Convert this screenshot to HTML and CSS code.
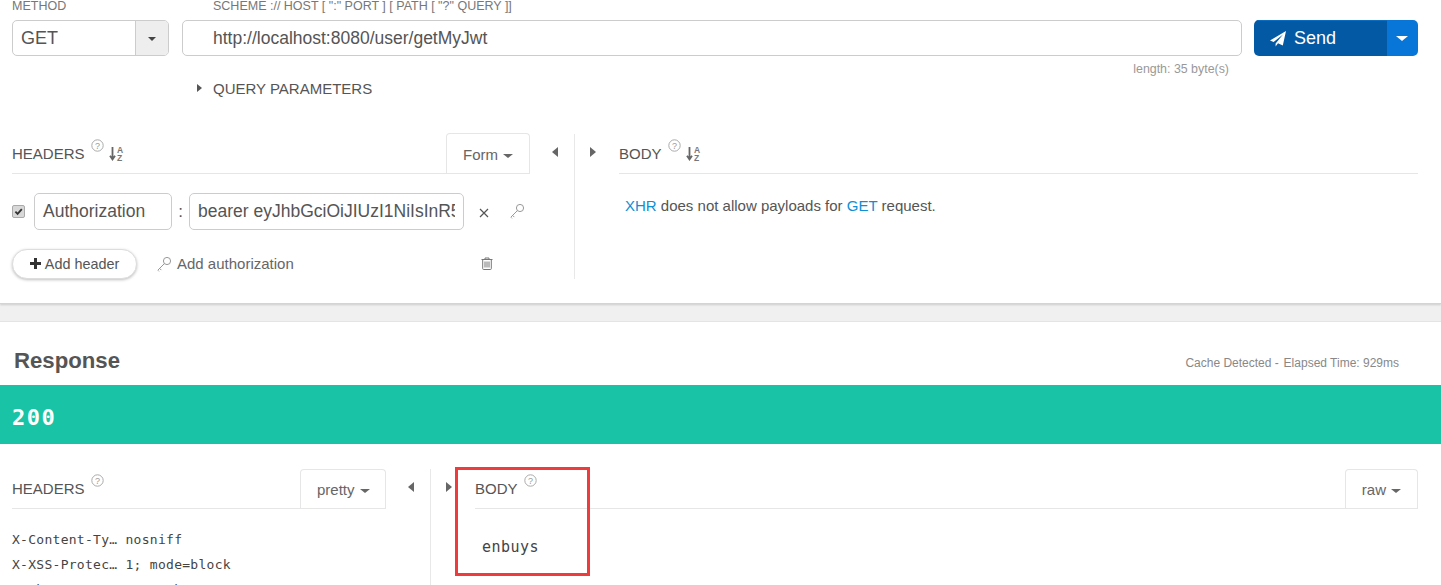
FILE: index.html
```html
<!DOCTYPE html>
<html lang="en">
<head>
<meta charset="utf-8">
<title>Request</title>
<link rel="stylesheet" href="styles.css">
</head>
<body>
<section class="request">
  <div class="url-row">
    <div class="method">
      <div class="cap">METHOD</div>
      <div class="select"><span class="select-val">GET</span><span class="select-btn"><i class="caret"></i></span></div>
    </div>
    <div class="url">
      <div class="cap cap-url">SCHEME :// HOST [ ":" PORT ] [ PATH [ "?" QUERY ]]</div>
      <div class="url-input">http://localhost:8080/user/getMyJwt</div>
      <div class="length">length: 35 byte(s)</div>
    </div>
    <div class="send">
      <div class="send-main">
        <svg class="plane" viewBox="0 0 16 16"><path d="M16 0 12.8 14.4 8 12.3 5.6 15.6V12.4L13 3.4 3.6 11 0 9.4Z" fill="#fff"/></svg>
        <span>Send</span>
      </div>
      <div class="send-drop"><i class="caret caret-w"></i></div>
    </div>
  </div>
  <div class="query"><i class="tri-r"></i><span class="query-label">QUERY PARAMETERS</span></div>
  <div class="split split-req">
    <div class="pane-l">
      <div class="pane-head">
        <span class="title">HEADERS</span>
        <svg class="help" viewBox="0 0 13 13"><circle cx="6.5" cy="6.5" r="5.7" fill="none" stroke="#aaa"/><text x="6.5" y="9.5" text-anchor="middle" class="help-t">?</text></svg>
        <svg class="sort" viewBox="0 0 15 15"><path d="M3.5 1v12M1 9.8l2.5 3.7L6 9.8" fill="none" stroke="#666" stroke-width="1.8"/><text x="8" y="7" class="sort-t">A</text><text x="8" y="15" class="sort-t">Z</text></svg>
        <span class="tab">Form<i class="caret caret-g"></i></span>
      </div>
      <div class="hdr-row">
        <span class="check"><svg viewBox="0 0 12 12"><path d="M2.6 6.2 5 8.6 9.6 3.4" fill="none" stroke="#333" stroke-width="2"/></svg></span>
        <div class="field field-name">Authorization</div>
        <span class="colon">:</span>
        <div class="field field-val"><span class="clip">bearer eyJhbGciOiJIUzI1NiIsInR5</span></div>
        <svg class="x" viewBox="0 0 10 10"><path d="M1 1 9 9M9 1 1 9" stroke="#555" stroke-width="1.2"/></svg>
        <svg class="key key-row" viewBox="0 0 16 16"><circle cx="11" cy="5" r="3.6" fill="none" stroke="#999"/><path d="M8.4 7.6 2 14M3.6 12.4l1.7 1.7M1.8 14.2l1.2 1.2" fill="none" stroke="#999"/></svg>
      </div>
      <div class="add-row">
        <span class="add-btn"><svg class="plus" viewBox="0 0 11 11"><path d="M5.5 0v11M0 5.5h11" stroke="#333" stroke-width="3"/></svg>Add header</span>
        <svg class="key key-add" viewBox="0 0 16 16"><circle cx="11" cy="5" r="3.6" fill="none" stroke="#999"/><path d="M8.4 7.6 2 14M3.6 12.4l1.7 1.7M1.8 14.2l1.2 1.2" fill="none" stroke="#999"/></svg>
        <span class="add-auth">Add authorization</span>
        <svg class="trash" viewBox="0 0 12 13"><path d="M.5 2.5h11M4 2.5V1h4v1.5M1.7 2.5v9.2c0 .5.3.8.8.8h7c.5 0 .8-.3.8-.8V2.5" fill="none" stroke="#777"/><path d="M4 4.5v6M6 4.5v6M8 4.5v6" stroke="#777"/></svg>
      </div>
    </div>
    <i class="tri-l arrow-l"></i>
    <div class="divider"></div>
    <i class="tri-r arrow-r"></i>
    <div class="pane-r">
      <div class="pane-head">
        <span class="title">BODY</span>
        <svg class="help" viewBox="0 0 13 13"><circle cx="6.5" cy="6.5" r="5.7" fill="none" stroke="#aaa"/><text x="6.5" y="9.5" text-anchor="middle" class="help-t">?</text></svg>
        <svg class="sort" viewBox="0 0 15 15"><path d="M3.5 1v12M1 9.8l2.5 3.7L6 9.8" fill="none" stroke="#666" stroke-width="1.8"/><text x="8" y="7" class="sort-t">A</text><text x="8" y="15" class="sort-t">Z</text></svg>
      </div>
      <p class="note"><span class="link">XHR</span> does not allow payloads for <span class="link">GET</span> request.</p>
    </div>
  </div>
</section>
<div class="gap"></div>
<section class="response">
  <div class="resp-head">
    <h2>Response</h2>
    <span class="elapsed">Cache Detected - <span class="elapsed-time">Elapsed Time: 929ms</span></span>
  </div>
  <div class="status">200</div>
  <div class="split split-resp">
    <div class="pane-l pane-l-resp">
      <div class="pane-head">
        <span class="title">HEADERS</span>
        <svg class="help" viewBox="0 0 13 13"><circle cx="6.5" cy="6.5" r="5.7" fill="none" stroke="#aaa"/><text x="6.5" y="9.5" text-anchor="middle" class="help-t">?</text></svg>
        <span class="tab tab-resp">pretty<i class="caret caret-g"></i></span>
      </div>
      <div class="mono-list">
        <div>X-Content-Ty… nosniff</div>
        <div>X-XSS-Protec… 1; mode=block</div>
        <div class="mono-row">Cache-Contro… no-cache<span class="more">?</span></div>
      </div>
    </div>
    <i class="tri-l arrow-l2"></i>
    <div class="divider"></div>
    <i class="tri-r arrow-r2"></i>
    <div class="pane-r pane-r-resp">
      <div class="pane-head">
        <span class="title">BODY</span>
        <svg class="help" viewBox="0 0 13 13"><circle cx="6.5" cy="6.5" r="5.7" fill="none" stroke="#aaa"/><text x="6.5" y="9.5" text-anchor="middle" class="help-t">?</text></svg>
        <span class="tab tab-resp tab-raw">raw<i class="caret caret-g"></i></span>
      </div>
      <div class="raw">enbuys</div>
    </div>
  </div>
  <div class="highlight"></div>
</section>
</body>
</html>
```
FILE: styles.css
```css
* { box-sizing: border-box; }
html, body { margin: 0; height: 585px; overflow: hidden; }
body { font-family: "Liberation Sans", Arial, sans-serif; color: #555; background: #fff; position: relative; }

.request { height: 304px; border-bottom: 1px solid #d4d4d4; box-shadow: 0 1px 2px rgba(0,0,0,.15); position: relative; padding: 0 23px 0 12px; background: #fff; }
.url-row { display: flex; height: 78px; }
.cap { font-size: 12.5px; color: #777; line-height: 12px; height: 20px; }
.method { width: 157px; margin-right: 13px; }
.select { display: flex; height: 36px; border: 1px solid #ccc; border-radius: 5px; overflow: hidden; }
.select-val { flex: 1; font-size: 18px; line-height: 34px; padding-left: 8px; color: #555; }
.select-btn { width: 33px; background: #eee; border-left: 1px solid #ccc; display: flex; align-items: center; justify-content: center; padding-top: 2px; }
.caret { display: inline-block; border: 4px solid transparent; border-top: 4px solid #444; border-bottom: 0; }
.caret-w { border-width: 5px 6px 0; border-top-color: #fff; }
.caret-g { border-width: 4px 5px 0; border-top-color: #666; margin-left: 5px; vertical-align: 2px; }
.url { width: 1060px; margin-right: 12px; position: relative; }
.cap-url { padding-left: 31px; }
.url-input { height: 36px; border: 1px solid #ccc; border-radius: 5px; font-size: 17.5px; line-height: 34px; padding-left: 30px; color: #555; }
.length { font-size: 12.4px; color: #999; text-align: right; padding: 6px 13px 0 0; line-height: 14px; }
.send { width: 164px; height: 36px; margin-top: 20px; display: flex; border-radius: 5px; overflow: hidden; color: #fff; }
.send-main { width: 133px; background: #0459a5; display: flex; align-items: center; padding-left: 16px; font-size: 18px; border-top: 1px solid #0a6cc0; }
.plane { width: 16px; height: 16px; margin-right: 8px; }
.send-drop { flex: 1; background: #0875d8; display: flex; align-items: center; justify-content: center; padding-right: 1px; }

.query { font-size: 15px; color: #555; height: 20px; line-height: 20px; padding-left: 185px; display: flex; align-items: center; }
.query-label { padding-top: 1px; }
.tri-r { display: inline-block; border-style: solid; border-color: transparent; border-width: 4px 0 4px 5px; border-left-color: #555; }
.tri-l { display: inline-block; border-style: solid; border-color: transparent; border-width: 5px 6px 5px 0; border-right-color: #666; }
.query .tri-r { margin-right: 11px; }

.split { display: flex; align-items: flex-start; position: relative; }
.split-req { margin-top: 36px; height: 145px; }
.pane-l { width: 518px; }
.pane-r { flex: 1; min-width: 0; margin-left: 23px; }
.divider { width: 1px; background: #e8e8e8; align-self: stretch; }
.arrow-l, .arrow-l2 { margin: 13px 16px 0 22px; }
.arrow-r, .arrow-r2 { margin: 13px 0 0 15px; border-width: 5px 0 5px 6px; border-left-color: #666; }
.pane-head { height: 40px; border-bottom: 1px solid #e6e6e6; display: flex; align-items: flex-end; position: relative; }
.title { font-size: 15px; color: #555; line-height: 16px; margin-bottom: 11px; }
.help { width: 13px; height: 13px; margin: 0 0 21px 6px; }
.help-t { font: 9px "Liberation Sans", sans-serif; fill: #999; }
.sort { width: 15px; height: 15px; margin: 0 0 12px 5px; overflow: visible; }
.sort-t { font: bold 8.5px "Liberation Sans", sans-serif; fill: #777; }
.tab { margin-left: auto; height: 40px; border: 1px solid #e6e6e6; border-bottom: 0; border-radius: 4px 4px 0 0; font-size: 15px; color: #666; line-height: 42px; padding: 0 16px; background: #fff; }
.tab-resp { height: 39px; line-height: 40px; padding: 0 15.5px; }
.tab-raw { padding: 0 16px; }

.hdr-row { display: flex; align-items: center; margin-top: 19px; height: 37px; }
.check { width: 13px; height: 13px; background: #d8d8d8; border: 1px solid #aaa; border-radius: 2px; margin-right: 9px; display: flex; }
.field { height: 37px; border: 1px solid #ccc; border-radius: 5px; font-size: 17.5px; line-height: 35px; padding: 0 8px; color: #555; white-space: nowrap; }
.field-name { width: 138px; }
.field-val { width: 275px; }
.clip { display: block; overflow: hidden; }
.colon { width: 17px; text-align: center; font-size: 17px; color: #555; }
.x { width: 10px; height: 10px; margin-left: 15px; margin-top: 3px; }
.key { width: 16px; height: 16px; }
.key-row { margin: 0 0 1px 20px; }
.add-row { display: flex; align-items: center; margin-top: 19px; height: 29px; position: relative; }
.add-btn { width: 125px; height: 30px; border-radius: 15px; border: 1px solid #ddd; box-shadow: 0 1px 3px rgba(0,0,0,.25); font-size: 14.4px; color: #555; display: flex; align-items: center; justify-content: center; background: #fff; }
.plus { width: 11px; height: 11px; margin-right: 4px; }
.key-add { margin-left: 19px; margin-right: 5px; }
.add-auth { font-size: 15px; color: #666; }
.trash { width: 12px; height: 13px; margin-left: auto; margin-right: 37px; }
.note { margin: 24px 0 0 6px; font-size: 15px; color: #555; line-height: 16px; }
.link { color: #0d8fd6; }

.gap { height: 18px; background: #f0f0f0; border-bottom: 1px solid #e4e4e4; }
.response { position: relative; }
.resp-head { height: 63px; display: flex; padding: 0 42px 0 14px; justify-content: space-between; align-items: flex-start; }
.resp-head h2 { margin: 26px 0 0; font-size: 22.2px; line-height: 25px; font-weight: 700; color: #555; }
.elapsed { margin: 34px 0 0; font-size: 12px; line-height: 14px; color: #888; }
.elapsed-time { margin-left: 1.5px; }
.status { height: 59px; background: #18c4a5; color: #fff; font: 700 22px/66px "DejaVu Sans Mono", monospace; letter-spacing: 1.5px; padding-left: 12px; }
.split-resp { padding: 25px 23px 0 12px; height: 141px; }
.pane-l-resp { width: 374px; }
.mono-list { margin-top: 18px; font: 13px/25px "DejaVu Sans Mono", monospace; letter-spacing: .28px; color: #444; white-space: nowrap; }
.mono-row { display: flex; }
.more { margin-left: auto; margin-right: 24px; color: #0d8fd6; font-weight: 700; }
.raw { margin: 28px 0 0 7px; font: 15px/20px "DejaVu Sans Mono", monospace; color: #444; letter-spacing: .45px; }
.highlight { position: absolute; left: 455px; top: 145px; width: 135px; height: 109px; border: 3px solid #ee3b3b; pointer-events: none; }
```
